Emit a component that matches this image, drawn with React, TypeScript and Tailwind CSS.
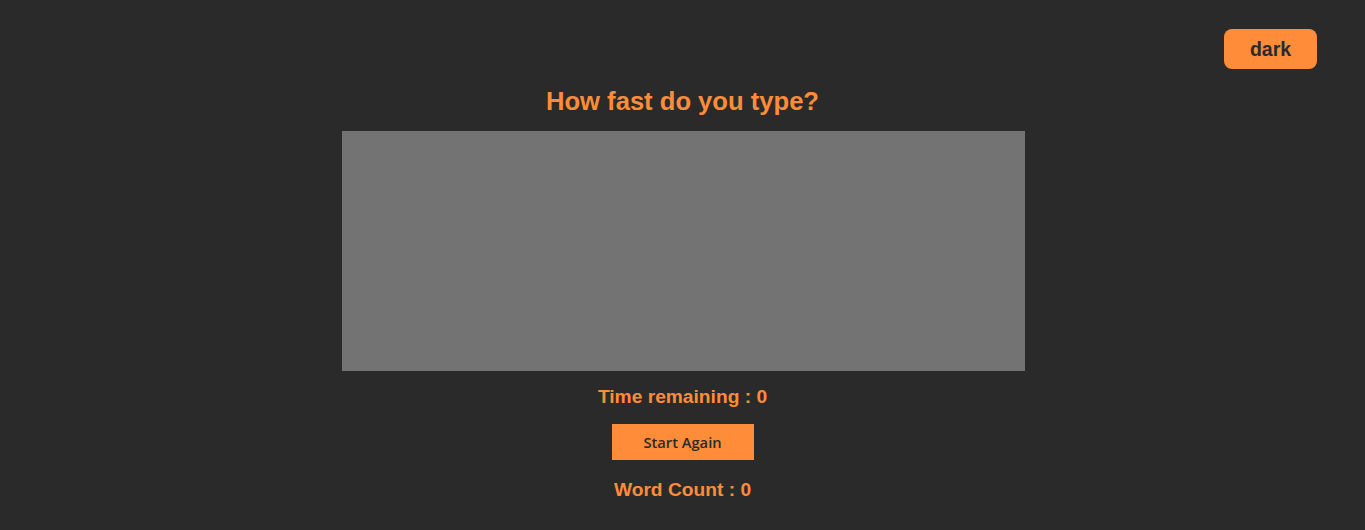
export default function App() {
  return (
    <div className="min-h-screen bg-[#2a2a2a] font-['Liberation_Sans',Arial,sans-serif]">
      <div className="flex justify-end pt-[29px] pr-[48px]">
        <button className="h-[40px] w-[93px] rounded-[8px] bg-[#ff8c38] pt-[2px] text-[19.5px] font-bold text-[#2a2a2a]">
          dark
        </button>
      </div>

      <div className="flex flex-col items-center">
        <h2 className="mt-[17px] text-[25.6px] leading-[30px] font-bold text-[#ff8c38]">
          How fast do you type?
        </h2>

        <textarea
          className="mt-[15px] ml-[1px] h-[240px] w-[683px] resize-none border-none bg-[#737373] outline-none"
          disabled
        />

        <h4 className="mt-[15px] text-[19.2px] leading-[22px] font-bold text-[#ff8c38]">
          Time remaining : 0
        </h4>

        <button className="mt-[16px] h-[36px] w-[142px] bg-[#ff8c38] font-['Open_Sans',sans-serif] text-[14.7px] font-semibold text-[#2a2a2a]">
          Start Again
        </button>

        <h4 className="mt-[19px] text-[19.2px] leading-[22px] font-bold text-[#ff8c38]">
          Word Count : 0
        </h4>
      </div>
    </div>
  );
}
